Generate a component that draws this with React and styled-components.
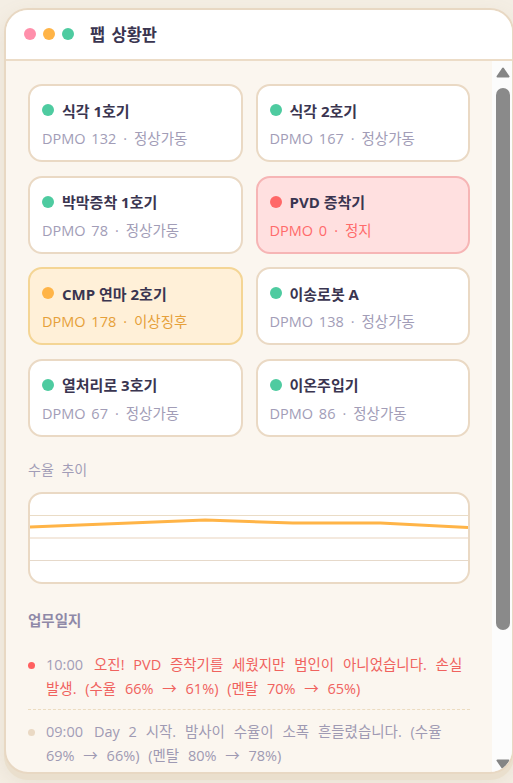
import React from 'react';
import styled, { createGlobalStyle } from 'styled-components';

const GlobalStyle = createGlobalStyle`
    body {
        margin: 0;
        background: #f4eee4;
        font-family: 'Open Sans', 'Noto Sans CJK KR', sans-serif;
        overflow: hidden;
    }
    * {
        box-sizing: border-box;
    }
`;

const Page = styled.div`
    height: 783px;
    padding: 8px 0 0 4px;
    overflow: hidden;
`;

const Window = styled.div`
    width: 510px;
    height: 766px;
    display: flex;
    flex-direction: column;
    background: #fbf6ef;
    border: 2px solid #e8d8c3;
    border-radius: 24px;
    overflow: hidden;
    box-shadow: 0 6px 0 #eadfcd, 0 8px 20px rgba(170, 140, 100, 0.15);
`;

const Header = styled.div`
    flex: none;
    height: 51px;
    display: flex;
    align-items: center;
    padding: 0 18px 1px;
    background: #ffffff;
    border-bottom: 2px solid #ecdcc7;
`;

const Dot = styled.span`
    width: ${(p) => p.size || 12}px;
    height: ${(p) => p.size || 12}px;
    border-radius: 50%;
    background: ${(p) => p.color};
    flex: none;
`;

const Dots = styled.div`
    display: flex;
    gap: 7px;
    margin-right: 16px;
`;

const Title = styled.div`
    font-size: 16.5px;
    font-weight: 700;
    word-spacing: 2px;
    color: #3a3550;
`;

const Body = styled.div`
    flex: 1;
    min-height: 0;
    display: flex;
`;

const Content = styled.div`
    flex: 1;
    overflow-y: auto;
    padding: 23px 22px 24px 22px;
    scrollbar-width: none;
    &::-webkit-scrollbar {
        display: none;
    }
`;

// 스크롤바 (클래식 스타일)
const Rail = styled.div`
    flex: none;
    width: 20px;
    display: flex;
    flex-direction: column;
    background: #fcfcfc;
    padding: 0 2px 0 4px;
`;

const Arrow = styled.div`
    flex: none;
    height: ${(p) => (p.down ? 22 : 24)}px;
    padding-top: ${(p) => (p.down ? 9 : 6)}px;
    display: flex;
    justify-content: center;
    align-items: flex-start;
`;

const Track = styled.div`
    flex: 1;
    padding-top: 3px;
`;

const Thumb = styled.div`
    height: 542px;
    border-radius: 7px;
    background: #8a8a8a;
`;

const Grid = styled.div`
    display: grid;
    grid-template-columns: 1fr 1fr;
    column-gap: 13px;
    row-gap: 13.5px;
    margin-bottom: 23.5px;
`;

const tones = {
    ok: { bg: '#ffffff', border: '#ead9c4', dot: '#4ecba0', sub: '#a29db7' },
    stop: { bg: '#ffe0e0', border: '#f6b5b5', dot: '#ff6868', sub: '#ff6b6b' },
    warn: { bg: '#fff0d8', border: '#f4d595', dot: '#ffb447', sub: '#e6a03a' },
};

const Card = styled.div`
    height: 78px;
    padding: 14px 12px 0;
    background: ${(p) => tones[p.tone].bg};
    border: 2px solid ${(p) => tones[p.tone].border};
    border-radius: 14px;
`;

const CardHead = styled.div`
    display: flex;
    align-items: center;
    gap: 8px;
    height: 20px;
    margin-bottom: 9px;
`;

const Name = styled.div`
    font-size: 15px;
    font-weight: 700;
    color: #3a3550;
`;

const Sub = styled.div`
    font-size: 14.5px;
    line-height: 20px;
    word-spacing: 2px;
    white-space: nowrap;
    color: ${(p) => tones[p.tone].sub};
`;

const Sep = styled.span`
    margin: 0 7px;
`;

const Label = styled.div`
    font-size: 14px;
    line-height: 20px;
    word-spacing: 4px;
    color: #a29db7;
    margin-bottom: 12px;
`;

const Chart = styled.div`
    height: 92px;
    background: #ffffff;
    border: 2px solid #ead9c4;
    border-radius: 14px;
    overflow: hidden;
    margin-bottom: 27px;
`;

const ChartSvg = styled.svg`
    display: block;
    width: 100%;
    height: 100%;
`;

const LogTitle = styled.div`
    font-size: 14.5px;
    line-height: 20px;
    font-weight: 700;
    color: #8f89a8;
    margin-bottom: 12px;
`;

const Entry = styled.div`
    display: flex;
    align-items: flex-start;
    padding: 10px 0 8px;
    border-bottom: 1px dashed ${(p) => (p.last ? 'transparent' : '#ecdcc0')};
`;

const EntryDot = styled.span`
    flex: none;
    width: 7px;
    height: 7px;
    border-radius: 50%;
    margin: 9px 11px 0 0;
    background: ${(p) => p.color};
`;

const EntryText = styled.div`
    font-size: 14.5px;
    line-height: 24px;
    word-spacing: 5px;
    color: ${(p) => p.color};
`;

const Time = styled.span`
    color: #a29db7;
    margin-right: 11px;
`;

const machines = [
    { name: '식각 1호기', dpmo: 132, state: '정상가동', tone: 'ok' },
    { name: '식각 2호기', dpmo: 167, state: '정상가동', tone: 'ok' },
    { name: '박막증착 1호기', dpmo: 78, state: '정상가동', tone: 'ok' },
    { name: 'PVD 증착기', dpmo: 0, state: '정지', tone: 'stop' },
    { name: 'CMP 연마 2호기', dpmo: 178, state: '이상징후', tone: 'warn' },
    { name: '이송로봇 A', dpmo: 138, state: '정상가동', tone: 'ok' },
    { name: '열처리로 3호기', dpmo: 67, state: '정상가동', tone: 'ok' },
    { name: '이온주입기', dpmo: 86, state: '정상가동', tone: 'ok' },
];

const logs = [
    { time: '10:00', text: '오진! PVD 증착기를 세웠지만 범인이 아니었습니다. 손실 발생. (수율 66% → 61%) (멘탈 70% → 65%)', dot: '#ff6060', color: '#f0625e' },
    { time: '09:00', text: 'Day 2 시작. 밤사이 수율이 소폭 흔들렸습니다. (수율 69% → 66%) (멘탈 80% → 78%)', dot: '#ead9c4', color: '#9f9ab3' },
    { time: '18:00', text: 'Day 1 종료. 모든 설비가 안정적으로 가동되었습니다. (수율 70% → 69%)', dot: '#ead9c4', color: '#9f9ab3' },
    { time: '09:00', text: 'Day 1 시작. 팹에 오신 것을 환영합니다. (수율 70%) (멘탈 80%)', dot: '#ead9c4', color: '#9f9ab3' },
];

// 수율 추이: 차트 안쪽 위에서부터의 y값
const trend = [33, 29.5, 26, 29, 29, 33.5];

const Triangle = ({ down }) => (
    <svg width="14" height="11" viewBox="0 0 14 11">
        <polygon
            points={down ? '1.5,1.5 12.5,1.5 7,9.5' : '7,1.5 12.5,9.5 1.5,9.5'}
            fill="#858585"
            stroke="#858585"
            strokeWidth="2"
            strokeLinejoin="round"
        />
    </svg>
);

const App = () => {
    const points = trend.map((y, i) => `${(i / (trend.length - 1)) * 440},${y}`).join(' ');
    return (
        <Page>
            <GlobalStyle />
            <Window>
                <Header>
                    <Dots>
                        <Dot color="#ff8fab" />
                        <Dot color="#ffb447" />
                        <Dot color="#4ecba0" />
                    </Dots>
                    <Title>팹 상황판</Title>
                </Header>
                <Body>
                    <Content>
                        <Grid>
                            {machines.map((m) => (
                                <Card key={m.name} tone={m.tone}>
                                    <CardHead>
                                        <Dot size={12} color={tones[m.tone].dot} />
                                        <Name>{m.name}</Name>
                                    </CardHead>
                                    <Sub tone={m.tone}>
                                        DPMO {m.dpmo}<Sep>·</Sep>{m.state}
                                    </Sub>
                                </Card>
                            ))}
                        </Grid>
                        <Label>수율 추이</Label>
                        <Chart>
                            <ChartSvg viewBox="0 0 440 88" preserveAspectRatio="none">
                                <line x1="0" y1="21.5" x2="440" y2="21.5" stroke="#eadcc6" strokeWidth="1" />
                                <line x1="0" y1="44" x2="440" y2="44" stroke="#f4e9de" strokeWidth="2" />
                                <line x1="0" y1="66.5" x2="440" y2="66.5" stroke="#e6d9ca" strokeWidth="1" />
                                <polyline points={points} fill="none" stroke="#ffb447" strokeWidth="3" strokeLinejoin="round" />
                            </ChartSvg>
                        </Chart>
                        <LogTitle>업무일지</LogTitle>
                        {logs.map((l, i) => (
                            <Entry key={i} last={i === logs.length - 1}>
                                <EntryDot color={l.dot} />
                                <EntryText color={l.color}>
                                    <Time>{l.time}</Time>
                                    {l.text}
                                </EntryText>
                            </Entry>
                        ))}
                    </Content>
                    <Rail>
                        <Arrow>
                            <Triangle />
                        </Arrow>
                        <Track>
                            <Thumb />
                        </Track>
                        <Arrow down>
                            <Triangle down />
                        </Arrow>
                    </Rail>
                </Body>
            </Window>
        </Page>
    );
};

export default App;
